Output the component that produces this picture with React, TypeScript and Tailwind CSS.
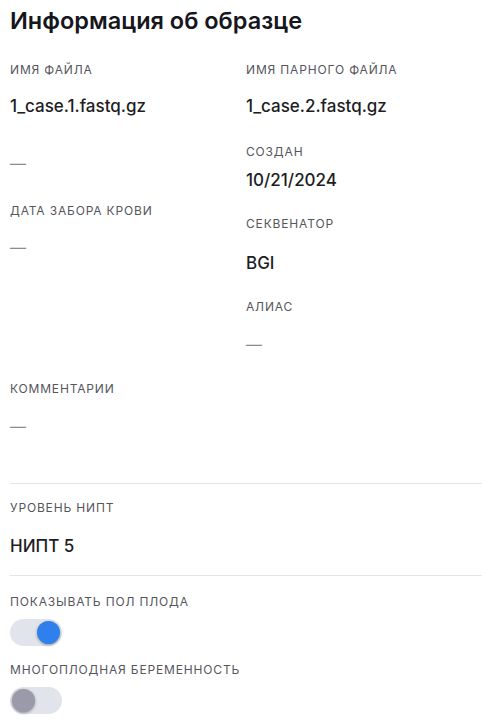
import React from "react";

const Label = ({ children, className = "" }: { children: React.ReactNode; className?: string }) => (
  <div className={`text-[12px] leading-4 font-normal uppercase tracking-[0.07em] text-[#55555c] ${className}`}>
    {children}
  </div>
);

const Value = ({ children, className = "" }: { children: React.ReactNode; className?: string }) => (
  <div className={`text-[17px] leading-6 font-medium text-[#1d1d24] ${className}`}>{children}</div>
);

const Dash = ({ className = "" }: { className?: string }) => (
  <div className={`text-[16px] leading-6 text-[#8b8b93] ${className}`}>—</div>
);

const Toggle = ({ on }: { on: boolean }) => (
  <div className="w-[52px] h-[27px] rounded-full bg-[#e1e4ea] flex items-center px-[2px]">
    <div
      className={`w-[23px] h-[23px] rounded-full shadow-[0_1px_3px_rgba(0,0,0,0.35)] ${
        on ? "ml-auto bg-[#2f80ed]" : "bg-[#9b9aab]"
      }`}
    />
  </div>
);

export default function App() {
  return (
    <div className="w-[485px] min-h-[719px] bg-white pl-[10px] pr-[3px] font-['Inter',sans-serif]">
      <h1 className="pt-[5px] text-[23.5px] leading-8 font-semibold text-[#16161d]">Информация об образце</h1>

      <div className="grid grid-cols-2 mt-[25px]">
        {/* left column */}
        <div className="flex flex-col">
          <Label>Имя файла</Label>
          <Value className="mt-4">1_case.1.fastq.gz</Value>
          <Dash className="mt-[33px]" />
          <Label className="mt-[28px]">Дата забора крови</Label>
          <Dash className="mt-4" />
        </div>

        {/* right column */}
        <div className="flex flex-col">
          <Label>Имя парного файла</Label>
          <Value className="mt-4">1_case.2.fastq.gz</Value>
          <Label className="mt-[26px]">Создан</Label>
          <Value className="mt-2">10/21/2024</Value>
          <Label className="mt-6">Секвенатор</Label>
          <Value className="mt-[19px]">BGI</Value>
          <Label className="mt-6">Алиас</Label>
          <Dash className="mt-[17px]" />
        </div>
      </div>

      <Label className="mt-[25px]">Комментарии</Label>
      <Dash className="mt-[17px]" />

      <div className="mt-[45px] border-t border-[#e4e4e7]" />

      <Label className="mt-4">Уровень НИПТ</Label>
      <Value className="mt-[18px]">НИПТ 5</Value>

      <div className="mt-[17px] border-t border-[#e4e4e7]" />

      <Label className="mt-[18px]">Показывать пол плода</Label>
      <div className="mt-[9px]">
        <Toggle on />
      </div>
      <Label className="mt-[16px]">Многоплодная беременность</Label>
      <div className="mt-[9px]">
        <Toggle on={false} />
      </div>
    </div>
  );
}
